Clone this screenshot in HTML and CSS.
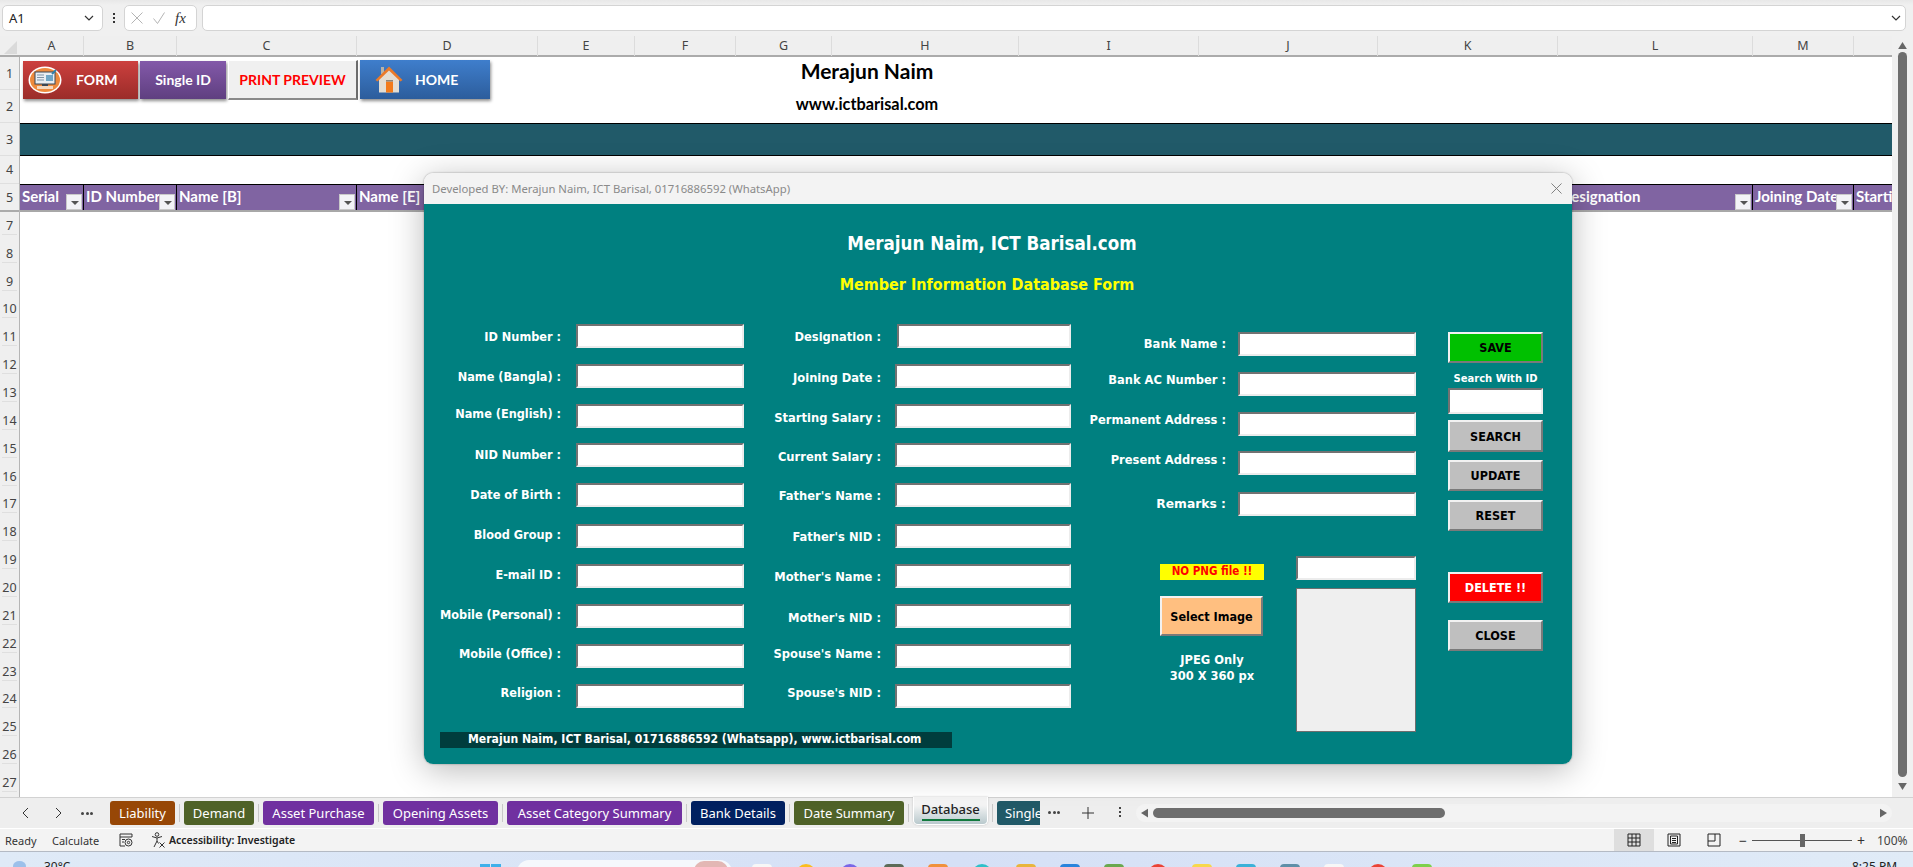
FILE: index.html
```html
<!DOCTYPE html>
<html lang="en">
<head>
<meta charset="utf-8">
<title>Database</title>
<link rel="stylesheet" href="styles.css">
</head>
<body>
<div class="app">
  <div class="formula-bar">
    <div class="name-box"><span>A1</span><svg class="chev" viewBox="0 0 10 6"><path d="M1 1l4 4 4-4"/></svg></div>
    <div class="bar-dots"><i></i><i></i><i></i></div>
    <div class="fx-box">
      <svg class="fx-ico" viewBox="0 0 12 12"><path d="M0.5 0.5l11 11M11.5 0.5l-11 11"/></svg>
      <svg class="fx-ico" viewBox="0 0 12 12"><path d="M0.5 6.5l4 5 7-11"/></svg>
      <span class="fx">fx</span>
    </div>
    <div class="formula-input"><svg class="chev" viewBox="0 0 10 6"><path d="M1 1l4 4 4-4"/></svg></div>
  </div>

  <div class="col-head">
    <div class="corner"><svg viewBox="0 0 12 12"><path d="M12 0v12H0z"/></svg></div>
    <div>A</div><div>B</div><div>C</div><div>D</div><div>E</div><div>F</div><div>G</div><div>H</div><div>I</div><div>J</div><div>K</div><div>L</div><div>M</div><div class="last"></div>
  </div>

  <div class="sheet">
    <div class="row-head">
      <div class="r33">1</div><div class="r33">2</div><div class="r33">3</div><div class="r28">4</div><div class="r28 r-strong">5</div>
      <div class="row-rest">
        <div>7</div><div>8</div><div>9</div><div>10</div><div>11</div><div>12</div><div>13</div><div>14</div><div>15</div><div>16</div><div>17</div><div>18</div><div>19</div><div>20</div><div>21</div><div>22</div><div>23</div><div>24</div><div>25</div><div>26</div><div>27</div>
      </div>
    </div>

    <div class="cells">
      <div class="title-cell">
        <div class="t-main">Merajun Naim</div>
        <div class="t-sub">www.ictbarisal.com</div>
      </div>
      <div class="band"></div>
      <div class="blank-row"></div>
      <div class="table-head">
        <div class="th">Serial<b class="filter"></b></div>
        <div class="th">ID Number<b class="filter"></b></div>
        <div class="th">Name [B]<b class="filter"></b></div>
        <div class="th">Name [E]<b class="filter"></b></div>
        <div class="th"></div><div class="th"></div><div class="th"></div><div class="th"></div><div class="th"></div><div class="th"></div><div class="th"></div>
        <div class="th">Designation<b class="filter"></b></div>
        <div class="th">Joining Date<b class="filter"></b></div>
        <div class="th th-last">Starting</div>
      </div>

      <div class="shape-bar">
        <div class="shape s-form">
          <svg class="form-ico" viewBox="0 0 34 28">
            <ellipse cx="17" cy="14" rx="16.5" ry="13.5" fill="#fff"/>
            <ellipse cx="17" cy="14" rx="15" ry="12" fill="#ee8a3c"/>
            <rect x="7" y="6" width="20" height="12" fill="#e9eef2" stroke="#3b4754"/>
            <path d="M9 9h7M9 11.500h7M9 14h7" stroke="#7f93a5"/>
            <rect x="18" y="9" width="7" height="6" fill="#6fa7c7"/>
            <path d="M24 8l4-4" stroke="#2f7fa8" stroke-width="2"/>
            <rect x="14" y="18" width="6" height="2" fill="#3b4754"/>
            <rect x="9" y="20" width="16" height="3" fill="#f4d9c0"/>
          </svg>
          <span>FORM</span>
        </div>
        <div class="shape s-single">Single ID</div>
        <div class="shape s-print">PRINT PREVIEW</div>
        <div class="shape s-home">
          <svg class="home-ico" viewBox="0 0 28 28">
            <rect x="6" y="1.500" width="3" height="7" fill="#b9b2a6"/>
            <path d="M4 13L14 3l10 10v14H4z" fill="#e4ddd2"/>
            <path d="M0.500 14.500L14 1l13.500 13.500-2 1.500L14 5 2.500 16z" fill="#ea7a2a"/>
            <rect x="11" y="16" width="7" height="11" fill="#f27a1a"/>
            <rect x="11" y="14.500" width="7" height="1.500" fill="#8d8478"/>
          </svg>
          <span>HOME</span>
        </div>
      </div>
    </div>

    <div class="v-scroll">
      <svg class="tri" viewBox="0 0 10 8"><path d="M5 0l5 8H0z"/></svg>
      <div class="v-thumb"></div>
      <svg class="tri" viewBox="0 0 10 8"><path d="M5 8L0 0h10z"/></svg>
    </div>
  </div>

  <div class="tab-bar">
    <div class="tab-nav">
      <svg class="nav-ico" viewBox="0 0 7 12"><path d="M6 1L1 6l5 5"/></svg>
      <svg class="nav-ico" viewBox="0 0 7 12"><path d="M1 1l5 5-5 5"/></svg>
      <div class="hdots"><i></i><i></i><i></i></div>
    </div>
    <div class="tabs">
      <div class="tab t-liab">Liability</div><i class="sep"></i>
      <div class="tab t-dem">Demand</div><i class="sep"></i>
      <div class="tab t-pur t-w111">Asset Purchase</div><i class="sep"></i>
      <div class="tab t-pur t-w115">Opening Assets</div><i class="sep"></i>
      <div class="tab t-pur t-w175">Asset Category Summary</div><i class="sep"></i>
      <div class="tab t-bank">Bank Details</div><i class="sep"></i>
      <div class="tab t-dem t-w110">Date Summary</div><i class="sep"></i>
      <div class="tab tab-active">Database</div><i class="sep"></i>
      <div class="tab-clip"><div class="tab t-single">Single ID</div></div>
    </div>
    <div class="hdots after-tabs"><i></i><i></i><i></i></div>
    <svg class="plus" viewBox="0 0 12 12"><path d="M6 0v12M0 6h12"/></svg>
    <div class="vdots"><i></i><i></i><i></i></div>
    <div class="h-scroll">
      <svg class="tri-h" viewBox="0 0 8 10"><path d="M0 5l8-5v10z"/></svg>
      <div class="h-thumb"></div>
      <svg class="tri-h tri-end" viewBox="0 0 8 10"><path d="M8 5L0 0v10z"/></svg>
    </div>
  </div>

  <div class="status-bar">
    <span class="st-ready">Ready</span>
    <span class="st-calc">Calculate</span>
    <svg class="st-macro" viewBox="0 0 14 14"><path d="M1 1h12v3H1zM1 4v9h5M3 6.500h3M3 9h2"/><circle cx="9.500" cy="9.500" r="3.500"/><circle cx="9.500" cy="9.500" r="1.200"/></svg>
    <svg class="st-acc" viewBox="0 0 14 16"><circle cx="6" cy="2.500" r="1.800"/><path d="M1 4.500l5 1.500 5-1.500M6 6v3L3 15M6 9l1.500 2.500M8.500 10.500l5 5M13.500 10.500l-5 5"/></svg>
    <span class="st-acc-text">Accessibility: Investigate</span>
    <div class="st-right">
      <div class="view view-on"><svg viewBox="0 0 14 14"><path d="M1 1h12v12H1zM5 1v12M9 1v12M1 5h12M1 9h12"/></svg></div>
      <div class="view"><svg viewBox="0 0 14 14"><path d="M1 1h12v12H1zM3.500 3h7v8h-7zM5 5.500h4M5 7.500h4M5 9.500h4"/></svg></div>
      <div class="view"><svg viewBox="0 0 14 14"><path d="M1 1h12v12H1zM1 8h7V1"/></svg></div>
      <span class="zoom-sign">−</span>
      <div class="slider"><i></i></div>
      <span class="zoom-sign">+</span>
      <span class="zoom-val">100%</span>
    </div>
  </div>

  <div class="taskbar">
    <div class="weather"><i class="cloud"></i><span>30°C</span></div>
    <div class="win-logo"><i></i><i></i></div>
    <div class="search-pill"><i class="pill-art"></i></div>
    <div class="tb-icons">
      <i class="ti c-white"></i><i class="ti c-yellow"></i><i class="ti c-purple"></i><i class="ti c-dark"></i><i class="ti c-orange"></i><i class="ti c-teal"></i><i class="ti c-folder"></i><i class="ti c-blue"></i><i class="ti c-green"></i><i class="ti c-red"></i><i class="ti c-yel2"></i><i class="ti c-cyan"></i><i class="ti c-slate"></i><i class="ti c-white"></i><i class="ti c-red"></i><i class="ti c-lime"></i>
    </div>
    <span class="clock">8:25 PM</span>
  </div>

  <div class="dialog">
    <div class="dlg-title">
      <span>Developed BY: Merajun Naim, ICT Barisal, 01716886592 (WhatsApp)</span>
      <svg class="dlg-x" viewBox="0 0 12 12"><path d="M0.500 0.500l11 11M11.500 0.500l-11 11"/></svg>
    </div>
    <div class="dlg-body">
      <h1 class="dlg-h1">Merajun Naim, ICT Barisal.com</h1>
      <h2 class="dlg-h2">Member Information Database Form</h2>
      <div class="form">
        <div class="fcol fcol-1">
          <div class="field"><label>ID Number :</label><div class="input"></div></div>
          <div class="field"><label>Name (Bangla) :</label><div class="input"></div></div>
          <div class="field"><label class="lift-3">Name (English) :</label><div class="input"></div></div>
          <div class="field"><label class="lift-1">NID Number :</label><div class="input"></div></div>
          <div class="field"><label class="lift-1">Date of Birth :</label><div class="input"></div></div>
          <div class="field"><label class="lift-2">Blood Group :</label><div class="input"></div></div>
          <div class="field"><label class="lift-2">E-mail ID :</label><div class="input"></div></div>
          <div class="field"><label class="lift-2">Mobile (Personal) :</label><div class="input"></div></div>
          <div class="field"><label class="lift-3">Mobile (Office) :</label><div class="input"></div></div>
          <div class="field"><label class="lift-4">Religion :</label><div class="input"></div></div>
        </div>
        <div class="fcol fcol-2">
          <div class="field"><label>Designation :</label><div class="input input-narrow"></div></div>
          <div class="field"><label class="drop-1">Joining Date :</label><div class="input"></div></div>
          <div class="field"><label class="drop-1">Starting Salary :</label><div class="input"></div></div>
          <div class="field"><label class="drop-1">Current Salary :</label><div class="input"></div></div>
          <div class="field"><label>Father's Name :</label><div class="input"></div></div>
          <div class="field"><label>Father's NID :</label><div class="input"></div></div>
          <div class="field"><label>Mother's Name :</label><div class="input"></div></div>
          <div class="field"><label class="drop-1">Mother's NID :</label><div class="input"></div></div>
          <div class="field"><label class="lift-3">Spouse's Name :</label><div class="input"></div></div>
          <div class="field"><label class="lift-4">Spouse's NID :</label><div class="input"></div></div>
        </div>
        <div class="fcol-3">
          <div class="bank-rows">
            <div class="field"><label>Bank Name :</label><div class="input"></div></div>
            <div class="field"><label class="lift-4">Bank AC Number :</label><div class="input"></div></div>
            <div class="field"><label class="lift-4">Permanent Address :</label><div class="input"></div></div>
            <div class="field"><label class="lift-3">Present Address :</label><div class="input"></div></div>
            <div class="field"><label class="label-big">Remarks :</label><div class="input"></div></div>
          </div>
          <div class="photo-area">
            <div class="photo-left">
              <div class="no-png">NO PNG file !!</div>
              <div class="btn btn-select">Select Image</div>
              <div class="jpeg-note">JPEG Only<br>300 X 360 px</div>
            </div>
            <div class="photo-right">
              <div class="input input-file"></div>
              <div class="photo-box"></div>
            </div>
          </div>
        </div>
        <div class="fcol-4">
          <div class="btn btn-save">SAVE</div>
          <div class="search-cap">Search With ID</div>
          <div class="input input-search"></div>
          <div class="btn btn-search">SEARCH</div>
          <div class="btn btn-update">UPDATE</div>
          <div class="btn btn-reset">RESET</div>
          <div class="btn btn-delete">DELETE !!</div>
          <div class="btn btn-close">CLOSE</div>
        </div>
      </div>
      <div class="dlg-foot">Merajun Naim, ICT Barisal, 01716886592 (Whatsapp), www.ictbarisal.com</div>
    </div>
  </div>
</div>
</body>
</html>
```

FILE: styles.css
```css
* { box-sizing: border-box; }
html, body { margin: 0; padding: 0; }
body { width: 1913px; height: 867px; overflow: hidden; background: #f0f0f0; font-family: "Noto Sans", sans-serif; }
.app { position: relative; width: 1913px; height: 867px; display: flex; flex-direction: column; overflow: hidden; }

/* formula bar */
.formula-bar { height: 36px; flex: none; padding: 5px 7px 5px 2px; display: flex; background: linear-gradient(#e8e8e8, #f0f0f0 5px); }
.name-box { width: 101px; height: 26px; background: #fff; border: 1px solid #d4d4d4; border-radius: 5px; display: flex; align-items: center; justify-content: space-between; padding: 0 8px 0 6px; font-size: 13px; color: #222; }
.chev { width: 10px; height: 6px; fill: none; stroke: #333; stroke-width: 1.200; }
.bar-dots { width: 21px; display: flex; flex-direction: column; align-items: center; justify-content: center; gap: 2px; }
.bar-dots i { width: 2px; height: 2px; background: #333; }
.fx-box { width: 73px; height: 26px; background: #fff; border: 1px solid #d4d4d4; border-radius: 5px; display: flex; align-items: center; padding-left: 6px; gap: 10px; }
.fx-ico { width: 12px; height: 12px; fill: none; stroke: #b4b4b4; stroke-width: 1; }
.fx { font: italic 15px "Liberation Serif", serif; color: #333; }
.formula-input { margin-left: 5px; flex: 1; height: 26px; background: #fff; border: 1px solid #d4d4d4; border-radius: 5px; display: flex; align-items: center; justify-content: flex-end; padding-right: 4px; }

/* column header */
.col-head { height: 21px; flex: none; display: grid; grid-template-columns: 20px 64px 93px 180px 181px 97px 101px 96px 187px 180px 179px 180px 195px 101px 38px 21px; background: #efefef; border-bottom: 2px solid #ababab; font-size: 12.500px; color: #444; text-align: center; line-height: 19px; }
.col-head > div { border-right: 1px solid #dcdcdc; }
.col-head .last { border-right: 0; grid-column: span 2; }
.corner { border-right: 0 !important; padding: 5px 2px 2px 4px; }
.corner svg { display: block; width: 13px; height: 13px; fill: #dadada; }

/* sheet */
.sheet { flex: 1; min-height: 0; display: grid; grid-template-columns: 20px 1872px 21px; background: #fff; }
.row-head { display: flex; flex-direction: column; background: #efefef; border-right: 1px solid #b5b5b5; color: #444; font-size: 12.500px; text-align: center; }
.row-head > div { display: flex; align-items: center; justify-content: center; }
.r33 { height: 33px; border-bottom: 1px solid #dfdfdf; }
.r28 { height: 28px; border-bottom: 1px solid #dfdfdf; }
.r-strong { border-bottom: 2px solid #ababab; }
.row-head .row-rest { flex: 1; display: grid; grid-auto-rows: 1fr; }
.row-rest > div { display: flex; align-items: center; justify-content: center; border-bottom: 1px solid #dfdfdf; }

.cells { position: relative; display: flex; flex-direction: column; overflow: hidden; background: #fff; }
.title-cell { height: 66px; width: 1694px; display: flex; flex-direction: column; align-items: center; color: #000; font-family: Lato, sans-serif; font-weight: 700; }
.t-main { font-size: 21px; line-height: 28px; }
.t-sub { font-size: 16.300px; line-height: 38px; }
.band { height: 33px; background: #215a69; border-top: 1px solid #000; border-bottom: 1px solid #000; }
.blank-row { height: 28px; }
.table-head { height: 28px; display: grid; grid-template-columns: 64px 93px 180px 181px 97px 101px 96px 187px 180px 179px 180px 195px 101px 38px; background: #8064a2; border-top: 1px solid #000; border-bottom: 2px solid #a8a8a8; }
.th { position: relative; border-right: 1px solid #000; color: #fff; font: 700 15px/22px Lato, sans-serif; padding-left: 2px; white-space: nowrap; overflow: hidden; }
.th-last { border-right: 0; }
.filter { position: absolute; right: 1px; bottom: 0; width: 16px; height: 16px; background: #f3f3f7; border: 1px solid #c9c9c9; }
.filter::after { content: ""; position: absolute; left: 4px; top: 6px; border: 4px solid transparent; border-top: 4px solid #555; border-bottom: 0; }

.shape-bar { position: absolute; left: 3px; top: 3px; display: flex; gap: 2px; align-items: flex-start; }
.shape { display: flex; align-items: center; justify-content: center; height: 38px; color: #fff; font: 700 14px Lato, sans-serif; }
.s-form { width: 115px; margin-top: 1px; background: linear-gradient(#cc403e, #9b2c29); box-shadow: 1px 2px 3px rgba(0,0,0,.45); justify-content: flex-start; padding: 0 0 2px 5px; gap: 14px; }
.form-ico { width: 34px; height: 28px; flex: none; margin-top: 2px; }
.s-single { width: 86px; margin-top: 1px; padding-bottom: 2px; background: linear-gradient(#8359a9, #5f3f80); box-shadow: 1px 2px 3px rgba(0,0,0,.45); }
.s-print { width: 130px; height: 40px; background: #f0f0f0; color: #f00; border-top: 1px solid #fff; border-left: 1px solid #fff; border-right: 2px solid #6c6c6c; border-bottom: 2px solid #8a8a8a; }
.s-home { width: 130px; height: 39px; background: linear-gradient(#3f7ecc, #2c5d9c); box-shadow: 1px 2px 3px rgba(0,0,0,.45); justify-content: flex-start; padding-left: 15px; gap: 12px; }
.home-ico { width: 28px; height: 29px; flex: none; }

.v-scroll { background: #f0f0f0; display: flex; flex-direction: column; align-items: center; padding: 0 0 3px; margin-top: -21px; position: relative; gap: 3px; }
.tri { width: 9px; height: 7px; fill: #666; flex: none; margin-top: 6px; }
.v-thumb { width: 9px; flex: 1; background: #6e6e6e; border-radius: 5px; }
.v-thumb + .tri { margin-top: 3px; margin-bottom: 4px; }

/* tabs */
.tab-bar { height: 32px; flex: none; display: flex; align-items: flex-start; background: #eeeeee; border-top: 1px solid #d2d2d2; border-bottom: 1px solid #fff; position: relative; }
.tab-nav { width: 110px; height: 30px; display: flex; align-items: center; padding-left: 22px; gap: 26px; flex: none; }
.nav-ico { width: 7px; height: 12px; fill: none; stroke: #333; stroke-width: 1; }
.hdots { display: flex; gap: 1.500px; }
.hdots i { width: 3px; height: 3px; background: #444; border-radius: 50%; }
.tab-nav .hdots { margin-left: -7px; }
.tabs { display: flex; width: 930px; height: 30px; align-items: flex-start; padding-top: 3px; flex: none; }
.sep { width: 1px; height: 18px; margin: 3px 4px; background: #c8c8c8; flex: none; }
.tab { height: 24px; padding: 0 9px; border-radius: 3px; color: #fff; font-size: 13px; line-height: 24px; text-align: center; flex: none; white-space: nowrap; }
.t-liab { width: 65px; background: #974706; padding: 0; }
.t-dem { width: 70px; background: #4f6228; padding: 0; }
.t-pur { background: #7030a0; padding: 0; }
.t-w111 { width: 111px; }
.t-w115 { width: 115px; }
.t-w175 { width: 175px; }
.t-bank { width: 94px; background: #002060; padding: 0; }
.t-w110 { width: 110px; }
.tab-active { width: 75px; height: 28px; margin-top: -4px; padding: 0; line-height: 24px; color: #222; font-weight: 500; background: linear-gradient(#f4f4f4 30%, #b9c9cd); border: 1px solid #fff; border-top: 0; border-radius: 0 0 5px 5px; box-shadow: 0 0 2px #bbb; position: relative; }
.tab-active::after { content: ""; position: absolute; left: 8px; right: 7px; bottom: 3px; height: 2px; background: #127a3e; }
.tab-clip { width: 43px; overflow: hidden; flex: none; }
.t-single { width: 70px; background: #215967; padding: 0 0 0 8px; text-align: left; border-radius: 3px 0 0 3px; }
.after-tabs { margin: 13px 0 0 8px; }
.plus { width: 12px; height: 12px; margin: 9px 0 0 22px; fill: none; stroke: #333; stroke-width: 1; flex: none; }
.vdots { display: flex; flex-direction: column; gap: 2px; margin: 9px 0 0 25px; }
.vdots i { width: 2px; height: 2px; background: #444; }
.h-scroll { position: absolute; left: 1136px; top: 6px; width: 756px; height: 18px; background: #f3f3f3; border-radius: 9px; display: flex; align-items: center; padding: 0 5px 0 5px; }
.tri-h { width: 7px; height: 10px; fill: #666; flex: none; }
.h-thumb { width: 292px; height: 10px; margin-left: 5px; background: #6e6e6e; border-radius: 5px; }
.tri-end { margin-left: auto; }

/* status */
.status-bar { height: 22px; flex: none; display: flex; align-items: center; background: #f3f3f3; font-size: 11px; color: #333; }
.st-ready { margin-left: 5px; width: 47px; }
.st-calc { width: 67px; }
.st-macro { width: 14px; height: 14px; fill: none; stroke: #333; stroke-width: 1; }
.st-acc { width: 14px; height: 16px; margin-left: 18px; fill: none; stroke: #333; stroke-width: 1; }
.st-acc-text { margin-left: 4px; font-weight: 600; font-size: 10.500px; color: #222; }
.st-right { margin-left: auto; display: flex; align-items: center; height: 22px; padding-right: 6px; }
.view { width: 40px; height: 22px; display: flex; align-items: center; justify-content: center; }
.view svg { width: 14px; height: 14px; fill: none; stroke: #222; stroke-width: 1; }
.view-on { background: #dedede; }
.zoom-sign { width: 12px; text-align: center; font-size: 14px; margin-left: 3px; }
.slider { position: relative; width: 100px; height: 1px; margin: 0 0 0 3px; background: #555; }
.slider i { position: absolute; left: 48px; top: -6px; width: 5px; height: 13px; background: #666; }
.zoom-val { margin-left: 10px; width: 30px; color: #444; font-size: 12px; }

/* taskbar */
.taskbar { height: 16px; flex: none; position: relative; overflow: hidden; display: flex; background: linear-gradient(90deg, #dfeaf7, #d5e0f6 50%, #e0ebf7); border-top: 1px solid #b4bac4; }
.weather { position: absolute; left: 13px; top: 9px; display: flex; gap: 18px; font-size: 12px; line-height: 12px; color: #222; }
.cloud { width: 13px; height: 10px; border-radius: 50%; background: #9cc0ea; }
.win-logo { position: absolute; left: 480px; top: 12px; display: flex; gap: 1px; }
.win-logo i { width: 10px; height: 10px; background: #3fb0ea; }
.search-pill { position: absolute; left: 517px; top: 8px; width: 215px; height: 24px; background: #f5f8fc; border-radius: 12px; }
.pill-art { position: absolute; right: 4px; top: 1px; width: 34px; height: 20px; border-radius: 10px; background: #e3b7b4; }
.tb-icons { position: absolute; left: 752px; top: 12px; display: flex; gap: 24px; }
.ti { width: 20px; height: 20px; border-radius: 4px; }
.c-white { background: #f7f7f7; }
.c-yellow { background: #fbbd1f; border-radius: 50%; }
.c-purple { background: #7a67e6; border-radius: 50%; }
.c-dark { background: #5c6b58; }
.c-orange { background: #1d1d1d; border: 3px solid #f0913c; }
.c-teal { background: #2fc0c9; border-radius: 50%; }
.c-folder { background: #e8b53c; }
.c-blue { background: #2a84dc; }
.c-green { background: #6aa84f; }
.c-red { background: #ea4335; border-radius: 50%; }
.c-yel2 { background: #f7d84c; }
.c-cyan { background: #3bb1d8; }
.c-slate { background: #5f8fa8; }
.c-lime { background: #7ed04c; }
.clock { position: absolute; left: 1852px; top: 9px; font-size: 12px; line-height: 12px; color: #222; }

/* dialog */
.dialog { position: absolute; left: 424px; top: 173px; width: 1148px; height: 591px; border-radius: 9px; overflow: visible; box-shadow: 0 6px 34px rgba(0,0,0,.28), 0 0 2px rgba(0,0,0,.4); display: flex; flex-direction: column; }
.dlg-title { height: 31px; flex: none; background: #f3f3f3; border-radius: 9px 9px 0 0; display: flex; align-items: center; justify-content: space-between; padding: 0 10px 0 8px; font-size: 11.300px; color: #8a8a8a; }
.dlg-x { width: 11px; height: 11px; fill: none; stroke: #777; stroke-width: 1; }
.dlg-body { flex: 1; background: #008080; border-radius: 0 0 9px 9px; padding: 28px 0 0 16px; color: #fff; font-family: "DejaVu Sans", sans-serif; }
.dlg-h1 { width: 1104px; margin: 0; font-size: 18.600px; font-weight: 700; line-height: 24px; text-align: center; font-family: "DejaVu Sans", sans-serif; font-stretch: condensed; }
.dlg-h2 { width: 1094px; margin: 17px 0 0; font-size: 16px; font-weight: 700; line-height: 24px; text-align: center; color: #ff0; font-stretch: condensed; }
.form { display: flex; height: 384px; margin-top: 27px; align-items: flex-start; }
.fcol { display: grid; grid-template-rows: repeat(2, 40px) 39px 40px 41px repeat(4, 40px) 24px; }
.fcol-1 { width: 304px; }
.fcol-2 { width: 327px; }
.field { display: flex; justify-content: flex-end; align-items: flex-start; }
.field label { flex: 1; height: 24px; display: flex; align-items: center; justify-content: flex-end; white-space: nowrap; font-size: 12.600px; font-weight: 700; font-stretch: condensed; }
.fcol-2 .field label { font-size: 12.800px; }
.lift-1 { padding-bottom: 2px; }
.lift-2 { padding-bottom: 4px; }
.lift-3 { padding-bottom: 6px; }
.lift-4 { padding-bottom: 8px; }
.drop-1 { padding-top: 2px; }
.input { width: 168px; height: 24px; flex: none; margin-left: 15px; background: #fff; border-style: solid; border-width: 2px; border-color: #727272 #ececec #ececec #727272; }
.fcol-2 .input { width: 176px; margin-left: 14px; }
.fcol-2 .input-narrow { width: 174px; margin-left: 16px; }
.fcol-3 { width: 345px; margin-top: 8px; }
.bank-rows { display: grid; grid-template-rows: 40px 40px 39px 41px 24px; }
.bank-rows .field label { font-size: 11.500px; font-stretch: normal; }
.bank-rows .field label.label-big { font-size: 12.300px; }
.bank-rows .input { width: 178px; margin-left: 12px; }
.photo-area { display: flex; margin: 40px 0 0 89px; gap: 32px; }
.photo-left { width: 104px; padding-top: 8px; text-align: center; font-size: 11px; font-weight: 700; }
.no-png { height: 16px; background: #ff0; color: #f00; line-height: 15px; font-stretch: condensed; font-size: 11.500px; }
.btn { display: flex; align-items: center; justify-content: center; color: #000; font-size: 12.500px; font-stretch: condensed; font-weight: 700; background: #bfbfbf; border-style: solid; border-width: 2px; border-color: #f2f2f2 #7a7a7a #7a7a7a #f2f2f2; }
.btn-select { height: 40px; width: 103px; margin-top: 16px; background: #ffbf80; font-size: 12.500px; font-stretch: condensed; }
.jpeg-note { margin-top: 16px; line-height: 16px; font-size: 11.500px; }
.photo-right { width: 120px; }
.input-file { width: 120px; margin-left: 0; }
.photo-box { height: 144px; margin-top: 8px; background: #efefef; border: 1px solid #6e6e6e; }
.fcol-4 { width: 95px; margin: 8px 0 0 32px; display: flex; flex-direction: column; }
.fcol-4 .btn { height: 31px; }
.btn-save { background: #00c000; }
.search-cap { height: 25px; padding-top: 7px; font-size: 10px; line-height: 18px; font-weight: 700; text-align: center; white-space: nowrap; }
.input-search { width: 95px; height: 26px; margin-left: 0; }
.fcol-4 .btn-search { height: 32px; margin-top: 6px; }
.btn-update { margin-top: 8px; }
.btn-reset { margin-top: 9px; }
.btn-delete { margin-top: 41px; background: #f00; color: #fff; }
.btn-close { margin-top: 17px; }
.dlg-foot { width: 512px; height: 16px; margin-top: 24px; padding-left: 28px; background: #003d3d; font-size: 12.100px; font-weight: 700; line-height: 15px; white-space: nowrap; font-stretch: condensed; }
```
